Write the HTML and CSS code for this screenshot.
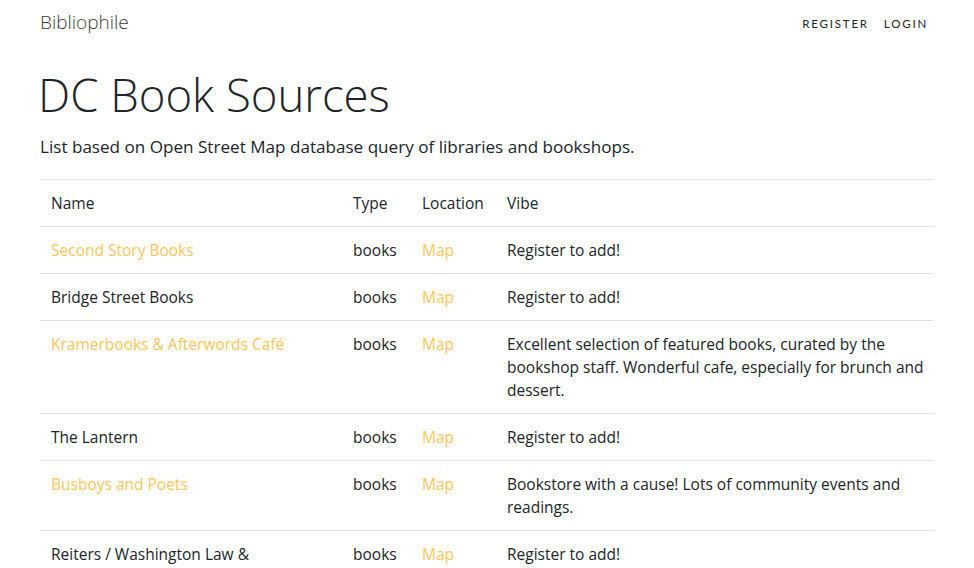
FILE: index.html
```html
<!DOCTYPE html>
<html lang="en">
<head>
<meta charset="utf-8">
<title>Bibliophile</title>
<link rel="stylesheet" href="styles.css">
</head>
<body>
<header class="navbar">
  <a class="brand" href="#">Bibliophile</a>
  <nav class="nav">
    <a href="#">Register</a>
    <a href="#">Login</a>
  </nav>
</header>
<main class="container">
  <h1 class="title">DC Book Sources</h1>
  <p class="lead">List based on Open Street Map database query of libraries and bookshops.</p>
  <table class="table">
    <colgroup>
      <col class="c-name"><col class="c-type"><col class="c-loc"><col class="c-vibe">
    </colgroup>
    <thead>
      <tr><th>Name</th><th>Type</th><th>Location</th><th>Vibe</th></tr>
    </thead>
    <tbody>
      <tr><td><a href="#">Second Story Books</a></td><td>books</td><td><a href="#">Map</a></td><td>Register to add!</td></tr>
      <tr><td>Bridge Street Books</td><td>books</td><td><a href="#">Map</a></td><td>Register to add!</td></tr>
      <tr><td><a href="#">Kramerbooks &amp; Afterwords Café</a></td><td>books</td><td><a href="#">Map</a></td><td>Excellent selection of featured books, curated by the bookshop staff. Wonderful cafe, especially for brunch and dessert.</td></tr>
      <tr><td>The Lantern</td><td>books</td><td><a href="#">Map</a></td><td>Register to add!</td></tr>
      <tr><td><a href="#">Busboys and Poets</a></td><td>books</td><td><a href="#">Map</a></td><td>Bookstore with a cause! Lots of community events and readings.</td></tr>
      <tr><td>Reiters / Washington Law &amp; Professional Books</td><td>books</td><td><a href="#">Map</a></td><td>Register to add!</td></tr>
    </tbody>
  </table>
</main>
</body>
</html>
```
FILE: styles.css
```css
* { box-sizing: border-box; }
body {
  margin: 0;
  font-family: "Open Sans", "Lato", sans-serif;
  color: #212529;
  background: #fff;
  font-size: 16px;
}
a { color: #fcc65a; text-decoration: none; }
.navbar {
  display: flex;
  justify-content: space-between;
  align-items: center;
  padding: 4px 40px 0 40px;
  height: 39px;
}
.brand {
  color: #3a3a3a;
  font-size: 19px;
  font-weight: 300;
  line-height: 26px;
}
.nav {
  display: flex;
  gap: 15px;
  padding-right: 6px;
  margin-top: 3px;
}
.nav a {
  font-family: "Lato", sans-serif;
  color: #212529;
  text-transform: uppercase;
  font-size: 11.5px;
  letter-spacing: 1.8px;
  font-weight: 400;
}
.container {
  padding: 0 40px;
}
.title {
  margin: 25px 0 0 -2px;
  font-weight: 300;
  font-size: 45.5px;
  line-height: 60px;
  color: #212529;
}
.lead {
  margin: 10px 0 19px;
  font-size: 17.1px;
  line-height: 26px;
}
.table {
  width: 100%;
  border-collapse: collapse;
  table-layout: fixed;
}
.c-name { width: 302px; }
.c-type { width: 69px; }
.c-loc { width: 85px; }
.c-vibe { width: auto; }
.table th, .table td {
  text-align: left;
  vertical-align: top;
  padding: 12px 11px 11px;
  line-height: 23px;
  border-top: 1px solid #dee2e6;
  font-size: 15.5px;
}
.table td:last-child { padding-right: 2px; }
.table th { font-weight: 400; }
```
